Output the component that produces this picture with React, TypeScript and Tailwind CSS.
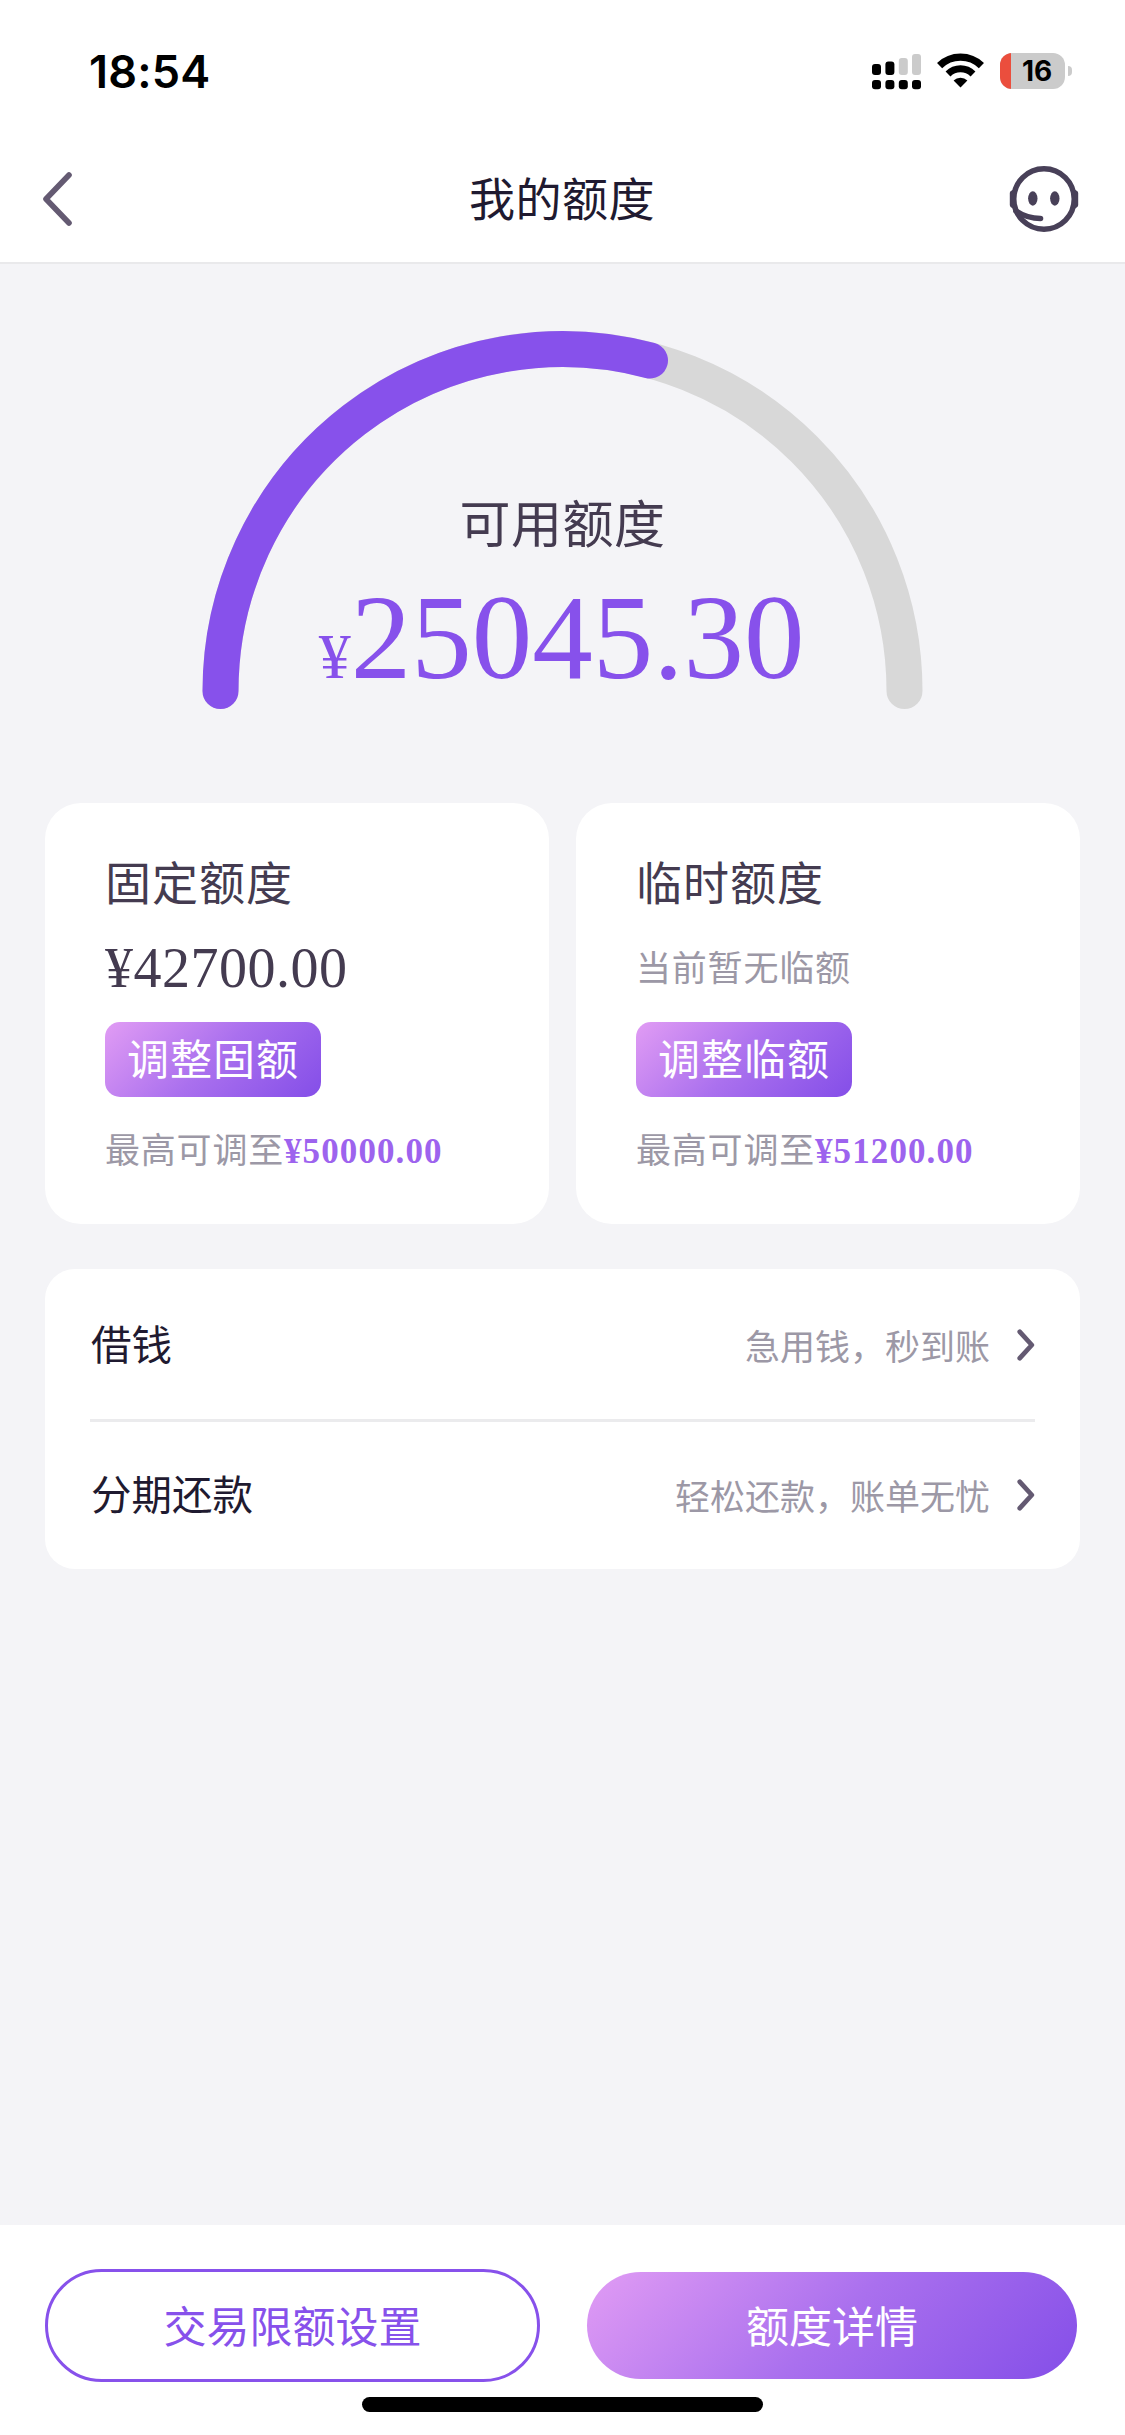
import type { ReactNode } from "react";

const quotas = [
  {
    title: "固定额度",
    value: "¥42700.00",
    action: "调整固额",
    max: "¥50000.00",
  },
  {
    title: "临时额度",
    empty: "当前暂无临额",
    action: "调整临额",
    max: "¥51200.00",
  },
];

const links = [
  { label: "借钱", desc: "急用钱，秒到账" },
  { label: "分期还款", desc: "轻松还款，账单无忧" },
];

function StatusBar() {
  return (
    <div className="flex h-[135px] items-start justify-between pl-[89px] pr-[53px]">
      <span className="mt-[44px] font-['Inter',sans-serif] text-[45px] font-semibold leading-[56px] tracking-[0.2px] text-black">
        18:54
      </span>
      <div className="mt-[53px] flex">
        <svg width="49" height="37" viewBox="0 0 49 37">
          <g fill="#000">
            <rect x="0" y="11" width="9" height="11" rx="3" />
            <rect x="13.4" y="8.5" width="9" height="13.5" rx="3" />
            <rect x="0" y="27" width="9" height="9.3" rx="3" />
            <rect x="13.4" y="27" width="9" height="9.3" rx="3" />
            <rect x="26.8" y="27" width="9" height="9.3" rx="3" />
            <rect x="40" y="27" width="9" height="9.3" rx="3" />
          </g>
          <g fill="#cbcbcb">
            <rect x="26.8" y="5" width="9" height="17" rx="3" />
            <rect x="40" y="1" width="9" height="21" rx="3" />
          </g>
        </svg>
        <svg className="ml-[16px]" width="47" height="35" viewBox="0 0 47 35">
          <path d="M2.6 12.6a30 30 0 0 1 41.8 0" fill="none" stroke="#000" strokeWidth="7.4" />
          <path d="M11 20.9a18 18 0 0 1 25 0" fill="none" stroke="#000" strokeWidth="7" />
          <path d="M23.5 34.4 16.6 27.6a9.8 9.8 0 0 1 13.8 0Z" fill="#000" />
        </svg>
        <div className="ml-[16px] flex h-[36px] w-[65px] items-center overflow-hidden rounded-[12px] bg-[#cbcbcb]">
          <span className="h-full w-[11px] bg-[#eb4e3d]" />
          <span className="ml-[11px] font-['Inter',sans-serif] text-[28px] font-bold leading-none text-black">
            16
          </span>
        </div>
        <span className="ml-[3px] mt-[13px] h-[10px] w-[4px] rounded-r-full bg-[#cbcbcb]" />
      </div>
    </div>
  );
}

function Header() {
  return (
    <header className="flex h-[129px] items-center justify-between border-b-2 border-[#e9e9eb] pl-[42px] pr-[46px]">
      <svg width="70" height="54" viewBox="0 0 70 54" fill="none">
        <path
          d="M27 3 4 27 27 51"
          stroke="#645a72"
          strokeWidth="5.6"
          strokeLinecap="round"
          strokeLinejoin="round"
        />
      </svg>
      <h1 className="-mr-[3px] -mt-[5px] text-[46px] tracking-[0.5px] text-[#1f1a30]">我的额度</h1>
      <svg width="70" height="68" viewBox="0 0 70 68" fill="none">
        <circle cx="35" cy="34" r="30.2" stroke="#484058" strokeWidth="5.4" />
        <path
          d="M5.5 24.5Q.8 25.5.8 28V40Q.8 42.5 5.5 44ZM64.5 24.5Q69.2 25.5 69.2 28V40Q69.2 42.5 64.5 44Z"
          fill="#484058"
        />
        <ellipse cx="23.8" cy="33.5" rx="4.7" ry="7.2" fill="#484058" />
        <ellipse cx="45.8" cy="33.5" rx="4.7" ry="7.2" fill="#484058" />
        <path d="M7 46Q18 53.5 31.5 53.5" stroke="#484058" strokeWidth="5.6" strokeLinecap="round" />
      </svg>
    </header>
  );
}

function Gauge() {
  return (
    <section className="relative mx-auto mt-[67px] h-[379px] w-[721px]">
      <svg width="721" height="379" viewBox="0 0 721 379" fill="none" strokeWidth="36" strokeLinecap="round">
        <path d="M18.5 360A342 342 0 0 1 702.5 360" stroke="#d8d8d8" />
        <path d="M18.5 360A342 342 0 0 1 448 29.5" stroke="#8751eb" />
      </svg>
      {/* centred over the arc */}
      <div className="absolute inset-x-0 top-[160px] flex flex-col items-center">
        <span className="text-[51px] leading-[60px] tracking-[0.5px] text-[#443b50]">可用额度</span>
        <span className="mr-[2px] mt-[18px] font-['Liberation_Serif',serif] text-[121px] leading-[136px] text-[#8751eb]">
          <span className="text-[64px]">¥</span>25045.30
        </span>
      </div>
    </section>
  );
}

function QuotaCard({ title, value, empty, action, max }: (typeof quotas)[number]) {
  return (
    <div className="flex h-[421px] flex-1 flex-col items-start rounded-[36px] bg-white pl-[60px] pt-[47px]">
      <h2 className="text-[46px] leading-[60px] tracking-[1px] text-[#443b50]">{title}</h2>
      <div className="mt-[27px] flex h-[60px] items-center">
        {value ? (
          <span className="mt-[2px] font-['Liberation_Serif',serif] text-[56px] leading-[60px] tracking-[0.5px] text-[#443b50]">
            {value}
          </span>
        ) : (
          <span className="-mt-[2px] text-[35px] tracking-[0.8px] text-[#9c98a6]">{empty}</span>
        )}
      </div>
      <button className="mt-[25px] h-[75px] w-[216px] rounded-[15px] bg-[linear-gradient(135deg,#e19cf4,#aa70ee_50%,#844ee8)] pb-[5px] text-[42px] leading-[70px] tracking-[1px] text-white">
        {action}
      </button>
      <p className="mt-[26px] text-[35px] leading-[50px] tracking-[0.8px] text-[#9c98a6]">
        最高可调至
        <span className="font-['Liberation_Serif',serif] font-bold tracking-[1.1px] text-[#9d63ee]">{max}</span>
      </p>
    </div>
  );
}

function LinkRow({ label, desc }: (typeof links)[number]) {
  return (
    <div className="flex h-[150px] items-center">
      <span className="-mt-[2px] ml-px text-[40.5px] text-[#1f1a30]">{label}</span>
      <span className="ml-auto mt-[3px] text-[35px] text-[#9c98a6]">{desc}</span>
      <svg className="ml-[27px] mt-[2px]" width="18" height="32" viewBox="0 0 18 32" fill="none">
        <path
          d="M2.8 2.8 14.8 16 2.8 29.2"
          stroke="#645a72"
          strokeWidth="4.8"
          strokeLinecap="round"
          strokeLinejoin="round"
        />
      </svg>
    </div>
  );
}

function Card({ children }: { children: ReactNode }) {
  return <div className="mx-[45px] mt-[45px] h-[300px] rounded-[30px] bg-white px-[45px]">{children}</div>;
}

export default function App() {
  return (
    <main className="flex h-[2435px] w-[1125px] flex-col bg-[#f4f4f7] font-['Noto_Sans_CJK_SC',sans-serif] font-normal">
      <div className="bg-white">
        <StatusBar />
        <Header />
      </div>

      <Gauge />

      <section className="mx-[45px] mt-[93px] flex gap-[27px]">
        {quotas.map((q) => (
          <QuotaCard key={q.title} {...q} />
        ))}
      </section>

      <Card>
        <LinkRow {...links[0]} />
        <div className="-mb-[3px] h-[3px] bg-[#ebebed]" />
        <LinkRow {...links[1]} />
      </Card>

      <footer className="mt-auto flex h-[210px] flex-col bg-white">
        <div className="mt-[44px] flex items-center gap-[47px] pl-[45px]">
          <button className="h-[113px] w-[495px] rounded-full border-[3px] border-[#8751eb] pb-[2px] text-[43px] text-[#8751eb]">
            交易限额设置
          </button>
          <button className="h-[107px] w-[490px] rounded-full bg-[linear-gradient(135deg,#e19cf4,#aa70ee_50%,#844ee8)] pb-[2px] text-[43px] text-white">
            额度详情
          </button>
        </div>
        <div className="mx-auto mt-[15px] h-[15px] w-[401px] rounded-full bg-black" />
      </footer>
    </main>
  );
}
